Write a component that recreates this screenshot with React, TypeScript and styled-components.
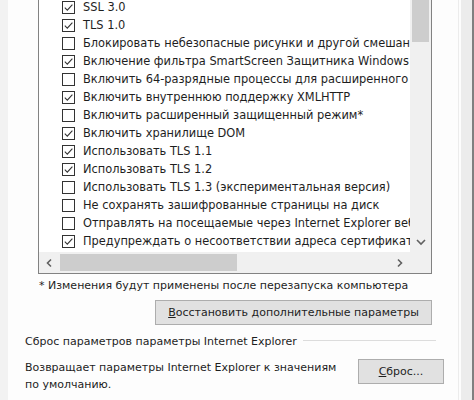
import styled, { createGlobalStyle } from "styled-components";

const GlobalStyle = createGlobalStyle`
    html, body {
        margin: 0;
        padding: 0;
        background: #fbfbfb;
        overflow: hidden;
    }
    body {
        font-family: "DejaVu Sans", "Noto Sans", sans-serif;
        font-size: 11.4px;
        color: #1e1e1e;
    }
`;

const Screen = styled.div`
    width: 474px;
    height: 400px;
    display: flex;
    flex-direction: row;
    overflow: hidden;
`;

const LeftEdge = styled.div`
    width: 8px;
    flex: none;
    background: #f2f2f2;
`;

const Dialog = styled.div`
    flex: 1;
    min-width: 0;
    background: #fdfdfd;
    padding-left: 17px;
    display: flex;
    flex-direction: column;
`;

const Lower = styled.div`
    display: flex;
    flex-direction: column;
    font-size: 11px;
`;

const RightFrame = styled.div`
    width: 17px;
    flex: none;
    display: flex;
    flex-direction: row;
    background: #fdfdfd;
`;

const FrameLine = styled.div<{ $w: number; $c: string }>`
    width: ${({ $w }) => $w}px;
    background: ${({ $c }) => $c};
`;

const ListBox = styled.div`
    margin: -3px 25px 0 13px;
    border: 1px solid #828282;
    background: #ffffff;
    display: flex;
    flex-direction: column;
`;

const Viewport = styled.div`
    height: 254px;
    display: flex;
    flex-direction: row;
`;

const Rows = styled.div`
    flex: 1;
    min-width: 0;
    overflow: hidden;
`;

const Row = styled.div`
    height: 18px;
    display: flex;
    align-items: center;
    padding-left: 23px;
    gap: 8px;
    white-space: nowrap;
`;

const Box = styled.span`
    flex: none;
    width: 13px;
    height: 13px;
    box-sizing: border-box;
    border: 1px solid #333333;
    background: #ffffff;
    display: flex;
    align-items: center;
    justify-content: center;
`;

const VScroll = styled.div`
    width: 21px;
    flex: none;
    background: #f0f0f0;
    display: flex;
    flex-direction: column;
    justify-content: space-between;
    align-items: center;
`;

const VThumb = styled.div`
    width: 17px;
    height: 44px;
    background: #cdcdcd;
`;

const ArrowButton = styled.div`
    width: 21px;
    height: 21px;
    display: flex;
    align-items: center;
    justify-content: center;
    flex: none;
`;

const HScroll = styled.div`
    height: 21px;
    background: #f0f0f0;
    display: flex;
    flex-direction: row;
    align-items: center;
`;

const HThumb = styled.div`
    width: 177px;
    flex: none;
    height: 17px;
    background: #cdcdcd;
`;

const HTrack = styled.div`
    flex: 1;
    min-width: 0;
`;

const Note = styled.div`
    margin: 3px 0 0 14px;
    line-height: 17px;
    white-space: nowrap;
`;

const ButtonRow = styled.div<{ $right: number }>`
    display: flex;
    justify-content: flex-end;
    margin-top: 6px;
    padding-right: ${({ $right }) => $right}px;
`;

const PushButton = styled.div<{ $w: number }>`
    width: ${({ $w }) => $w}px;
    height: 25px;
    flex: none;
    box-sizing: border-box;
    border: 1px solid #adadad;
    background: #e1e1e1;
    display: flex;
    align-items: center;
    justify-content: center;
    white-space: nowrap;
`;

const Key = styled.span`
    text-decoration: underline;
`;

const GroupTitle = styled.div`
    margin-top: 8px;
    display: flex;
    flex-direction: row;
    align-items: center;
    gap: 6px;
    padding-right: 21px;
    line-height: 17px;
    white-space: nowrap;
`;

const GroupLine = styled.div`
    flex: 1;
    height: 1px;
    background: #dcdcdc;
    margin-top: -2px;
`;

const ResetRow = styled.div`
    margin-top: 9px;
    display: flex;
    flex-direction: row;
    align-items: flex-start;
    justify-content: space-between;
    padding-right: 13px;
`;

const ResetText = styled.div`
    line-height: 17px;
    white-space: nowrap;
`;

const items: [boolean, string][] = [
    [true, "SSL 3.0"],
    [true, "TLS 1.0"],
    [false, "Блокировать небезопасные рисунки и другой смешанный контент"],
    [true, "Включение фильтра SmartScreen Защитника Windows"],
    [false, "Включить 64-разрядные процессы для расширенного защищенного режима*"],
    [true, "Включить внутреннюю поддержку XMLHTTP"],
    [false, "Включить расширенный защищенный режим*"],
    [true, "Включить хранилище DOM"],
    [true, "Использовать TLS 1.1"],
    [true, "Использовать TLS 1.2"],
    [false, "Использовать TLS 1.3 (экспериментальная версия)"],
    [false, "Не сохранять зашифрованные страницы на диск"],
    [false, "Отправлять на посещаемые через Internet Explorer веб-сайты запросы"],
    [true, "Предупреждать о несоответствии адреса сертификата*"],
    [false, "Предупреждать о смене режима безопасности"],
];

const Check = () => (
    <svg width="11" height="11" viewBox="0 0 11 11">
        <path d="M1.8 5.6 L4.3 8.1 L9.4 2.6" fill="none" stroke="#333" strokeWidth="1.1" />
    </svg>
);

const Chevron = ({ dir }: { dir: "left" | "right" | "down" }) => {
    const d = dir === "left" ? "M6 1.5 L2.5 5 L6 8.5" : dir === "right" ? "M3 1.5 L6.5 5 L3 8.5" : "M1 3 L5 7 L9 3";
    return (
        <svg width="10" height="10" viewBox="0 0 10 10">
            <path d={d} fill="none" stroke="#606060" strokeWidth="1.6" />
        </svg>
    );
};

export default function App() {
    return (
        <Screen>
            <GlobalStyle />
            <LeftEdge />
            <Dialog>
                <ListBox>
                    <Viewport>
                        <Rows>
                            {items.map(([on, label]) => (
                                <Row key={label}>
                                    <Box>{on && <Check />}</Box>
                                    <span>{label}</span>
                                </Row>
                            ))}
                        </Rows>
                        <VScroll>
                            <VThumb />
                            <ArrowButton><Chevron dir="down" /></ArrowButton>
                        </VScroll>
                    </Viewport>
                    <HScroll>
                        <ArrowButton><Chevron dir="left" /></ArrowButton>
                        <HThumb />
                        <HTrack />
                        <ArrowButton><Chevron dir="right" /></ArrowButton>
                        <ArrowButton />
                    </HScroll>
                </ListBox>
                <Lower>
                    <Note>* Изменения будут применены после перезапуска компьютера</Note>
                    <ButtonRow $right={25}>
                        <PushButton $w={277}><span><Key>В</Key>осстановить дополнительные параметры</span></PushButton>
                    </ButtonRow>
                    <GroupTitle>
                        <span>Сброс параметров параметры Internet Explorer</span>
                        <GroupLine />
                    </GroupTitle>
                    <ResetRow>
                        <ResetText>
                            Возвращает параметры Internet Explorer к значениям
                            <br />
                            по умолчанию.
                        </ResetText>
                        <PushButton $w={86}><span><Key>С</Key>брос...</span></PushButton>
                    </ResetRow>
                </Lower>
            </Dialog>
            <RightFrame>
                <FrameLine $w={1} $c="#fdfdfd" />
                <FrameLine $w={1} $c="#ececec" />
                <FrameLine $w={2} $c="#fdfdfd" />
                <FrameLine $w={11} $c="#ececec" />
                <FrameLine $w={2} $c="#808080" />
            </RightFrame>
        </Screen>
    );
}
